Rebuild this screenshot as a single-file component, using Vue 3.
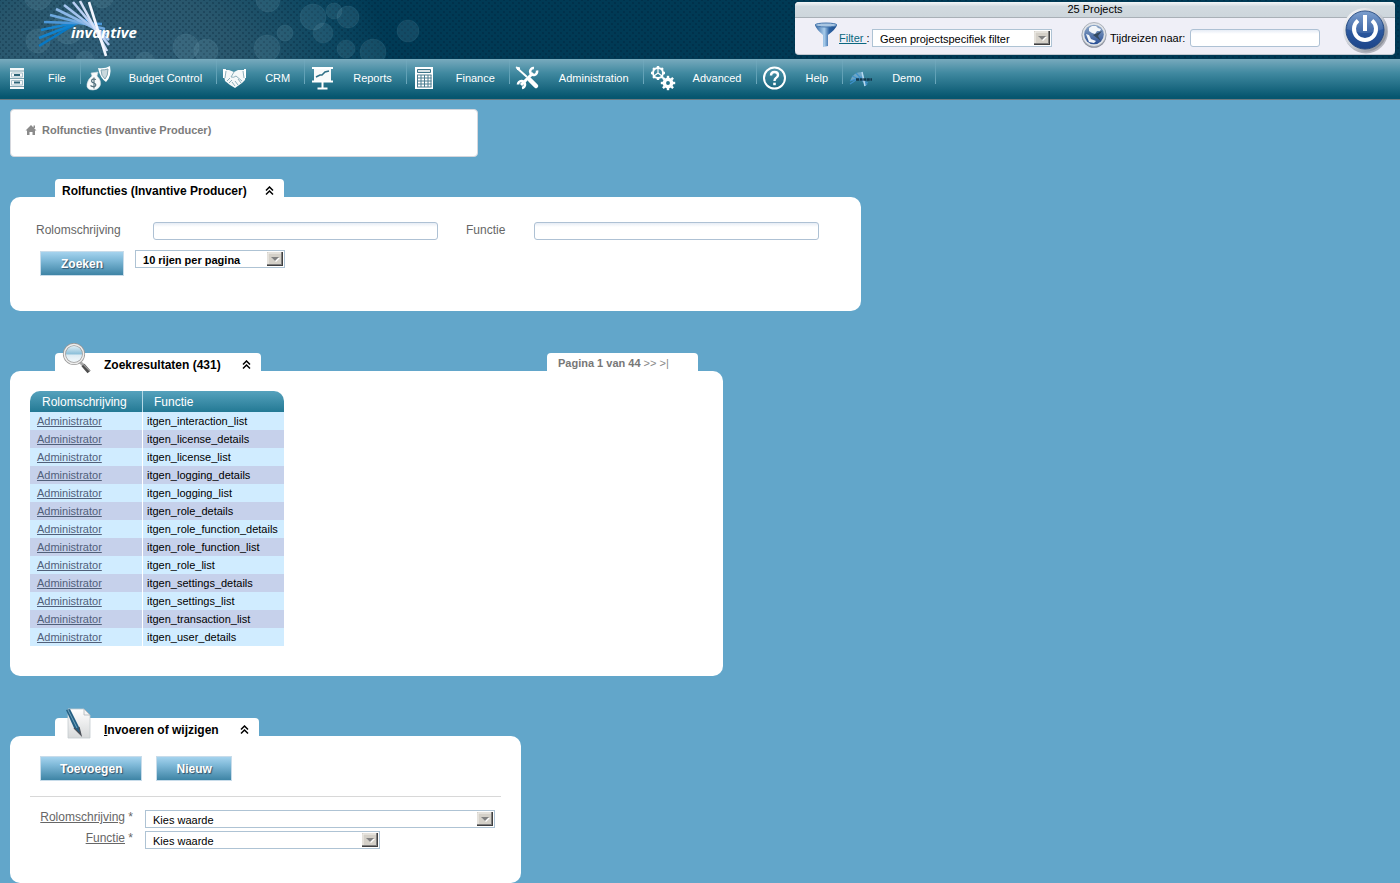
<script setup>
import { ref } from 'vue'

const menu = ['File', 'Budget Control', 'CRM', 'Reports', 'Finance', 'Administration', 'Advanced', 'Help', 'Demo']

const functions = [
  'itgen_interaction_list',
  'itgen_license_details',
  'itgen_license_list',
  'itgen_logging_details',
  'itgen_logging_list',
  'itgen_role_details',
  'itgen_role_function_details',
  'itgen_role_function_list',
  'itgen_role_list',
  'itgen_settings_details',
  'itgen_settings_list',
  'itgen_transaction_list',
  'itgen_user_details',
]

const bubbles = [
  [38, -4, 14], [102, -4, 12], [38, 41, 12], [68, 28, 16], [85, 60, 9], [145, 62, 10],
  [186, 47, 13], [206, 51, 12], [268, 0, 12], [285, 33, 8], [267, 48, 13], [313, 17, 13],
  [334, 11, 8], [348, 17, 11], [323, 33, 10], [346, 49, 9], [373, 52, 13], [408, 31, 11],
]

const rays = [
  [39, 46, 75, 24, '#0878c4'], [39, 38, 80, 22, '#0f82cf'], [41, 30, 88, 20, '#1684cf'],
  [44, 22, 102, 24, '#4c97d8'], [50, 15, 105, 29, '#6ea9e0'], [56, 9, 108, 35, '#8cb8e8'],
  [64, 5, 109, 40, '#a4c4ee'], [73, 2, 109, 45, '#b9cff4'], [80, 1, 107, 51, '#d3dff8'],
  [89, 2, 106, 56, '#f4f6ff'],
]

const teeth = [0, 45, 90, 135, 180, 225, 270, 315]

const project = ref('Geen projectspecifiek filter')
const travel = ref('')
const role = ref('')
const func = ref('')
const pageSize = ref('10 rijen per pagina')
const newRole = ref('Kies waarde')
const newFunc = ref('Kies waarde')
</script>

<template>
  <div class="page">
    <header class="banner">
      <svg class="art" width="430" height="59" viewBox="0 0 430 59" aria-hidden="true">
        <circle v-for="(b, i) in bubbles" :key="i" :cx="b[0]" :cy="b[1]" :r="b[2]" fill="#8fc0cf" fill-opacity=".13" stroke="#8fc0cf" stroke-opacity=".08" />
        <line v-for="(r, i) in rays" :key="'r' + i" :x1="r[0]" :y1="r[1]" :x2="r[2]" :y2="r[3]" :stroke="r[4]" stroke-width="2.6" />
        <text x="71" y="38" class="brand">invantive</text>
      </svg>

      <section class="tools">
        <div class="tools-title">25 Projects</div>
        <div class="tools-row">
          <svg class="funnel" width="24" height="26" viewBox="0 0 24 26" aria-hidden="true">
            <defs>
              <linearGradient id="fun" x1="0" x2="1"><stop offset="0" stop-color="#2f62a0" /><stop offset=".42" stop-color="#a9cdec" /><stop offset=".65" stop-color="#2d62a3" /><stop offset="1" stop-color="#1f4f8c" /></linearGradient>
            </defs>
            <path d="M1 3 Q2 7 9 13 V25 L14 24 V13 Q22 7 23 3 Z" fill="url(#fun)" />
            <ellipse cx="12" cy="3" rx="11" ry="2" fill="#a9c6e2" stroke="#4676ad" />
          </svg>
          <label class="filter-label" for="project"><a href="#">Filter </a>:</label>
          <span class="pick pick-project">
            <select id="project" v-model="project"><option>Geen projectspecifiek filter</option></select>
            <svg class="drop" viewBox="0 0 16 14" aria-hidden="true"><path d="M0 0H16V14H0Z" fill="#404040" /><path d="M0 0H15V13H0Z" fill="#808080" /><path d="M0 0H14V12H0Z" fill="#d4d0c8" /><path d="M1 12V1H14" stroke="#f4f2ee" fill="none" /><path d="M5 6H13L9 10Z" fill="#fff" /><path d="M4 5H12L8 9Z" fill="#808080" /></svg>
          </span>
          <svg class="globe" width="26" height="26" viewBox="0 0 26 26" aria-hidden="true">
            <defs><linearGradient id="glb" x1="0" y1="0" x2="0" y2="1"><stop offset="0" stop-color="#90a9c8" /><stop offset="1" stop-color="#294f95" /></linearGradient></defs>
            <circle cx="13" cy="13.500" r="12.300" fill="#888e9b" />
            <circle cx="13" cy="12.500" r="12" fill="#dfe3e8" stroke="#a0a6ae" stroke-width=".8" />
            <circle cx="13" cy="12.500" r="9.800" fill="url(#glb)" />
            <path d="M8 6 L11 4 15 4 17 6 20 7 19 9 16 9 14 12 11 11 8 9Z M5 12 L8 13 10 17 15 19 13 21 8 20Z" fill="#f1f5f9" />
            <path d="M21 9 L12 13 20 19 17 14Z" fill="#344a60" />
          </svg>
          <label for="travel">Tijdreizen naar:</label>
          <input id="travel" v-model="travel" class="field travel" type="text" />
        </div>
        <button class="power" type="button" aria-label="Afmelden">
          <svg width="48" height="48" viewBox="0 0 48 48" aria-hidden="true">
            <defs>
              <linearGradient id="pow" x1="0" y1="0" x2="0" y2="1"><stop offset="0" stop-color="#6c93c8" /><stop offset=".5" stop-color="#2c59a0" /><stop offset="1" stop-color="#1d4589" /></linearGradient>
              <linearGradient id="rim" x1="0" y1="0" x2="1" y2="1"><stop offset="0" stop-color="#fff" /><stop offset=".55" stop-color="#c5cad2" /><stop offset="1" stop-color="#70757f" /></linearGradient>
            </defs>
            <circle cx="25" cy="25.500" r="22" fill="#777c86" opacity=".5" />
            <circle cx="24" cy="24" r="22" fill="url(#rim)" />
            <circle cx="24" cy="24" r="19" fill="url(#pow)" stroke="#274b82" />
            <path d="M6 23 A18 18 0 0 1 42 23 Q24 31 6 23Z" fill="#fff" opacity=".12" />
            <path d="M17 14.500 A11 11 0 1 0 31 14.500" fill="none" stroke="#fff" stroke-width="4" />
            <path d="M24 9V25" stroke="#fff" stroke-width="4" />
          </svg>
        </button>
      </section>
    </header>

    <nav class="menu">
      <a v-for="(item, i) in menu" :key="item" href="#" class="menu-item">
        <svg class="menu-icon" width="28" height="28" viewBox="0 0 28 28" aria-hidden="true">
          <g v-if="i === 0">
            <path d="M5 4H19V25H5Z" fill="#f5f8f9" />
            <path d="M5 7H19M5 14.500H19M5 22.500H19" stroke="#7fa3b1" />
            <path d="M6.500 9H17.500V13H6.500ZM6.500 16.500H17.500V21H6.500Z" fill="none" stroke="#a9c2cc" />
            <path d="M9 11H15M9 18.500H15" stroke="#2c6378" stroke-width="2" />
          </g>
          <g v-else-if="i === 1">
            <path d="M12 4Q19 5 24 2Q26 12 20 18Q14 14 12 4Z" fill="#fff" />
            <path d="M15 6Q19 6 22 5Q22 12 19 15Q15 12 15 6Z" fill="#cbd9de" stroke="#86a7b3" />
            <path d="M6 12L5 9 12 8 11 12Q16 17 14 22 Q12 26 7 26 Q0 26 1 20Q2 15 6 12Z" fill="#f8fafb" stroke="#c9d7dd" stroke-width=".6" />
            <path d="M10 15.500Q6 14 5.500 17Q6 19 8 19Q10.500 20 9.500 22Q7 23.500 4.500 21.500M8 13.500V24.500" fill="none" stroke="#54717d" stroke-width="1.200" />
          </g>
          <g v-else-if="i === 2">
            <path d="M1 6L7 6 12 8 16 6 22 6 24 8 23 16 20 19 13 24 8 21 3 17Z" fill="#f5f8f9" />
            <path d="M1 5V14L3 14 4 5ZM22 5L22 14H24V5Z" fill="#fff" />
            <path d="M12 8L9 13Q12 14 14 12L20 17M16 15L19 19M13 17L16 21M10 18L13 22M5 17L8 14M7 19L10 16M21 7L22 14M4 7L3 14" fill="none" stroke="#8fb0bc" stroke-width="1" />
          </g>
          <g v-else-if="i === 3" fill="none">
            <path d="M2 4H23" stroke="#fff" stroke-width="2" />
            <path d="M4 5H21V17H4Z" fill="#f8fafb" />
            <path d="M2 17.500H23M12.500 18V24M7.500 24.500H17.500" stroke="#fff" stroke-width="2" />
            <path d="M6 13L10 11 12 11 15 8 19 7" stroke="#2f6f87" stroke-width="1.500" />
          </g>
          <g v-else-if="i === 4">
            <path d="M3 3H21V25H3Z" fill="#fff" />
            <path d="M5.500 5.500H18.500V8.500H5.500Z" fill="#d6e1e5" stroke="#3d7489" />
            <path d="M5.500 11V23M9 11V23M12.500 11V23M16 11V23M19 11V23M5 11H19.500M5 14H19.500M5 17H19.500M5 20H19.500M5 23H19.500" fill="none" stroke="#4b7d90" />
          </g>
          <g v-else-if="i === 5" fill="none" stroke="#fff">
            <path d="M2 4L12 13" stroke-width="2" />
            <path d="M15 16L21 22" stroke-width="4.500" stroke-linecap="round" />
            <path d="M6 21L18 9" stroke-width="3" />
            <path d="M22 6.500A3.500 3.500 0 1 1 19 4M7 24A3.500 3.500 0 1 0 3 20.500" stroke-width="2.600" />
            <path d="M1 3L5 4 3 6Z" fill="#fff" />
          </g>
          <g v-else-if="i === 6" fill="none" stroke="#fff">
            <circle cx="9" cy="9" r="5" stroke-width="2" />
            <path v-for="t in teeth" :key="t" d="M9 2V4" stroke-width="2.400" :transform="`rotate(${t} 9 9)`" />
            <path d="M9 9V4M9 9L5 12M9 9L13 12" stroke-width="1.200" />
            <circle cx="19" cy="19" r="3.700" stroke-width="3.500" />
            <path v-for="t in teeth" :key="'b' + t" d="M19 11.800V14" stroke-width="2.400" :transform="`rotate(${t} 19 19)`" />
          </g>
          <g v-else-if="i === 7" fill="none" stroke="#fff">
            <circle cx="12.500" cy="14" r="10.500" stroke-width="2" />
            <path d="M9 11.500Q9 8 12.500 8Q16 8 16 11Q16 13 14 14Q12.500 15 12.500 17" stroke-width="2.400" />
            <path d="M12.500 18.700V21.200" stroke-width="2.600" />
          </g>
          <g v-else fill="none">
            <path d="M2 17Q5 8 14 8L19 21Q11 13 2 17Z" fill="#8bb9dd" opacity=".65" />
            <path d="M2 20L11 14M2 17L14 13M4 12L20 19M8 9L19 21M14 8L17 22" stroke="#3e91cb" stroke-width="1.200" />
            <path d="M14 8L17 22" stroke="#b9d9ee" stroke-width="1.500" />
            <path d="M8 15.500H24" stroke="#12384e" stroke-width="2.500" stroke-dasharray="3 .6" />
          </g>
        </svg>
        {{ item }}
      </a>
    </nav>

    <main class="content">
      <div class="crumbs">
        <svg width="12" height="12" viewBox="0 0 12 12" aria-hidden="true"><path d="M6 1L11.500 6.500H10V11H7.500V8H4.500V11H2V6.500H.5ZM8.500 1.500H10V4H8.500Z" fill="#8b8b8b" /></svg>
        <span>Rolfuncties (Invantive Producer)</span>
      </div>

      <section class="panel search">
        <div class="tabs">
          <h2 class="tab">Rolfuncties (Invantive Producer)
            <button class="fold" type="button" aria-label="Inklappen"><svg width="9" height="10" viewBox="0 0 9 10"><path d="M1 4.500L4.500 1 8 4.500M1 8.500L4.500 5 8 8.500" /></svg></button>
          </h2>
        </div>
        <form class="card" @submit.prevent>
          <div class="search-row">
            <label for="role">Rolomschrijving</label>
            <input id="role" v-model="role" class="field" type="text" />
            <label for="func">Functie</label>
            <input id="func" v-model="func" class="field" type="text" />
          </div>
          <div class="actions">
            <button class="btn" type="submit">Zoeken</button>
            <span class="pick pick-size">
              <select v-model="pageSize" aria-label="Rijen per pagina"><option>10 rijen per pagina</option></select>
              <svg class="drop" viewBox="0 0 16 14" aria-hidden="true"><path d="M0 0H16V14H0Z" fill="#404040" /><path d="M0 0H15V13H0Z" fill="#808080" /><path d="M0 0H14V12H0Z" fill="#d4d0c8" /><path d="M1 12V1H14" stroke="#f4f2ee" fill="none" /><path d="M5 6H13L9 10Z" fill="#fff" /><path d="M4 5H12L8 9Z" fill="#808080" /></svg>
            </span>
          </div>
        </form>
      </section>

      <section class="panel results">
        <div class="tabs">
          <h2 class="tab with-icon">
            <svg class="tab-icon" width="32" height="34" viewBox="0 0 32 34" aria-hidden="true">
              <defs><linearGradient id="lens" x1="0" y1="0" x2="0" y2="1"><stop offset="0" stop-color="#eff7fb" /><stop offset=".5" stop-color="#8bbfd9" /><stop offset=".55" stop-color="#dcebf3" /><stop offset="1" stop-color="#f7fbfd" /></linearGradient></defs>
              <path d="M18 19L22 23" stroke="#aaa" stroke-width="3" />
              <path d="M21 22L27 29" stroke="#4d4d4d" stroke-width="4" />
              <path d="M21 21L28 28" stroke="#999" stroke-width="1.200" />
              <circle cx="12" cy="11" r="9.600" fill="url(#lens)" stroke="#999" stroke-width="3" />
              <circle cx="12" cy="11" r="9.600" fill="none" stroke="#eee" stroke-width="1.500" />
            </svg>
            Zoekresultaten (431)
            <button class="fold" type="button" aria-label="Inklappen"><svg width="9" height="10" viewBox="0 0 9 10"><path d="M1 4.500L4.500 1 8 4.500M1 8.500L4.500 5 8 8.500" /></svg></button>
          </h2>
          <div class="pager"><b>Pagina 1 van 44</b> <a href="#">&gt;&gt;</a> <a href="#">&gt;|</a></div>
        </div>
        <div class="card">
          <table class="grid">
            <thead><tr><th scope="col">Rolomschrijving</th><th scope="col">Functie</th></tr></thead>
            <tbody>
              <tr v-for="f in functions" :key="f"><td><a href="#">Administrator</a></td><td>{{ f }}</td></tr>
            </tbody>
          </table>
        </div>
      </section>

      <section class="panel editor">
        <div class="tabs">
          <h2 class="tab with-icon">
            <svg class="tab-icon" width="32" height="34" viewBox="0 0 32 34" aria-hidden="true">
              <defs><linearGradient id="paper" x1="0" y1="0" x2="0" y2="1"><stop offset="0" stop-color="#fff" /><stop offset="1" stop-color="#d7d9da" /></linearGradient></defs>
              <path d="M6 1H22L28 7V30H6Z" fill="url(#paper)" stroke="#c4cbcf" stroke-width=".8" />
              <path d="M22 1V7H28Z" fill="#f5f5f5" stroke="#aeb5b9" stroke-width=".8" />
              <path d="M4 2L8 1 17 19 19 27 12 20Z" fill="#245f83" />
              <path d="M6 2L15 20" stroke="#75a6bf" stroke-width="1" />
              <path d="M12 20L19 27 17 19" fill="none" stroke="#4b4f57" stroke-width="1.200" />
            </svg>
            <span><u>I</u>nvoeren of wijzigen</span>
            <button class="fold" type="button" aria-label="Inklappen"><svg width="9" height="10" viewBox="0 0 9 10"><path d="M1 4.500L4.500 1 8 4.500M1 8.500L4.500 5 8 8.500" /></svg></button>
          </h2>
        </div>
        <form class="card" @submit.prevent>
          <div class="edit-buttons">
            <button class="btn" type="submit">Toevoegen</button>
            <button class="btn" type="reset">Nieuw</button>
          </div>
          <hr />
          <div class="edit-grid">
            <label for="new-role"><u>Rolomschrijving</u> *</label>
            <span class="pick pick-role">
              <select id="new-role" v-model="newRole"><option>Kies waarde</option></select>
              <svg class="drop" viewBox="0 0 16 14" aria-hidden="true"><path d="M0 0H16V14H0Z" fill="#404040" /><path d="M0 0H15V13H0Z" fill="#808080" /><path d="M0 0H14V12H0Z" fill="#d4d0c8" /><path d="M1 12V1H14" stroke="#f4f2ee" fill="none" /><path d="M5 6H13L9 10Z" fill="#fff" /><path d="M4 5H12L8 9Z" fill="#808080" /></svg>
            </span>
            <label for="new-func"><u>Functie</u> *</label>
            <span class="pick pick-func">
              <select id="new-func" v-model="newFunc"><option>Kies waarde</option></select>
              <svg class="drop" viewBox="0 0 16 14" aria-hidden="true"><path d="M0 0H16V14H0Z" fill="#404040" /><path d="M0 0H15V13H0Z" fill="#808080" /><path d="M0 0H14V12H0Z" fill="#d4d0c8" /><path d="M1 12V1H14" stroke="#f4f2ee" fill="none" /><path d="M5 6H13L9 10Z" fill="#fff" /><path d="M4 5H12L8 9Z" fill="#808080" /></svg>
            </span>
          </div>
        </form>
      </section>
    </main>
  </div>
</template>

<style>
html {
  background: #62a6ca;
}
</style>

<style scoped>
.page {
  font: 11px/14px "Liberation Sans", Arial, sans-serif;
  color: #000;
}
.page * {
  box-sizing: border-box;
}
.banner {
  display: flex;
  justify-content: space-between;
  height: 59px;
  padding: 2px 5px 0 0;
  position: relative;
  background:
    radial-gradient(circle, rgba(0, 25, 45, 0.25) 1px, transparent 1px) 0 0 / 6px 6px,
    radial-gradient(circle, rgba(0, 25, 45, 0.25) 1px, transparent 1px) 3px 3px / 6px 6px,
    radial-gradient(ellipse 280px 190px at 110px 70px, #31607a 0, #29576d 45%, #0d4761 80%, #003a55 100%);
}
.art {
  position: absolute;
  left: 0;
  top: 0;
}
.brand {
  font: italic bold 15px "Open Sans", "Noto Sans", sans-serif;
  fill: #fff;
}
.tools {
  position: relative;
  width: 600px;
  height: 53px;
  margin-left: auto;
  background: #efeff7;
  border-radius: 4px;
  border-bottom: 1px solid #c3c9d1;
}
.tools-title {
  height: 16px;
  text-align: center;
  background: linear-gradient(#f5f7f8, #d2dae0 30%, #cdd6dc);
  border-bottom: 1px solid #a9b0b7;
  border-radius: 4px 4px 0 0;
}
.tools-row {
  display: flex;
  align-items: center;
  height: 36px;
  padding: 4px 0 0 19px;
}
.funnel {
  margin-right: 1px;
  align-self: flex-start;
}
.filter-label {
  width: 32px;
}
.filter-label a {
  color: #0b6780;
  white-space: pre;
}
.globe {
  margin: 0 3px 0 29px;
  align-self: flex-start;
}
.travel {
  margin-left: auto;
  margin-right: 75px;
}
.power {
  position: absolute;
  right: 6px;
  top: 4px;
  width: 48px;
  height: 48px;
  padding: 0;
  border: 0;
  background: none;
}
.menu {
  display: flex;
  height: 41px;
  background: linear-gradient(#78aabd, #4089a0 35%, #06566f 95%);
  border-bottom: 1px solid #6d7a80;
}
.menu-item {
  position: relative;
  height: 25px;
  padding: 12px 14px 0 48px;
  border-right: 1px solid;
  border-image: linear-gradient(rgba(130, 185, 204, 0.1), rgba(130, 185, 204, 0.8)) 1;
  color: #fff;
  text-decoration: none;
  white-space: nowrap;
}
.menu-item:nth-child(n + 5) {
  padding-left: 49px;
}
.menu-icon {
  position: absolute;
  left: 5px;
  top: 5px;
}
.content {
  padding: 9px 10px 0;
}
.crumbs {
  display: flex;
  gap: 5px;
  align-items: center;
  max-width: 468px;
  height: 48px;
  margin-bottom: 22px;
  padding: 0 14px 6px;
  background: #fff;
  border: 1px solid #d5d7dd;
  border-radius: 4px;
  color: #7c7c7c;
  font-weight: bold;
}
.panel + .panel {
  margin-top: 42px;
}
.search {
  max-width: 851px;
}
.results {
  max-width: 713px;
}
.editor {
  max-width: 511px;
}
.tabs {
  display: flex;
  justify-content: space-between;
  padding: 0 25px 0 45px;
}
.tab {
  position: relative;
  display: flex;
  height: 18px;
  margin: 0;
  padding: 5px 10px 0 7px;
  background: #fff;
  border-radius: 4px 4px 0 0;
  font-size: 12px;
  line-height: 14px;
  white-space: nowrap;
}
.with-icon {
  padding-left: 49px;
}
.tab-icon {
  position: absolute;
  left: 7px;
  top: -10px;
}
.fold {
  display: flex;
  margin: 2px 0 0 21px;
  padding: 0;
  border: 0;
  background: none;
}
.search .fold {
  margin-left: 18px;
}
.fold path {
  fill: none;
  stroke: #000;
  stroke-width: 1.5;
}
.card {
  padding: 20px;
  background: #fff;
  border-radius: 10px;
}
.search .card {
  padding: 25px 26px 35px;
}
.search-row {
  display: grid;
  grid-template-columns: 117px 285px 96px 285px;
  height: 18px;
  color: #666;
  font-size: 12px;
  line-height: 16px;
}
.search-row label:nth-of-type(2) {
  margin-left: 28px;
}
.field {
  height: 18px;
  padding: 0 4px;
  border: 1px solid #aec1d4;
  border-radius: 3px;
  background: linear-gradient(#e6ecf5, #fff 4px);
  font: inherit;
}
.travel {
  width: 130px;
}
.actions {
  display: flex;
  gap: 11px;
  height: 36px;
  padding: 10px 4px 0;
  align-items: flex-end;
}
.actions .pick {
  align-self: flex-start;
}
.btn {
  height: 25px;
  padding: 0 19px;
  border: 1px solid #c8dcea;
  background: linear-gradient(#a5d3ee, #7fb9d8 35%, #3e84a5);
  color: #fff;
  font: bold 12px/14px "Liberation Sans", Arial, sans-serif;
  text-shadow: 1px 1px 1px #35536b;
}
.search .btn {
  padding: 0 20px;
}
.pick {
  position: relative;
  display: block;
  height: 18px;
}
.pick select {
  display: block;
  width: 100%;
  height: 18px;
  padding: 2px 20px 0 7px;
  appearance: none;
  border: 1px solid #aec3d4;
  border-radius: 0;
  background: #fff;
  color: #000;
  font: 11px/14px "Liberation Sans", Arial, sans-serif;
}
.pick-size select {
  font-weight: bold;
}
.drop {
  position: absolute;
  right: 2px;
  top: 2px;
  width: 16px;
  height: 14px;
  pointer-events: none;
}
.pick-project {
  width: 180px;
  margin-left: 1px;
}
.pick-size {
  width: 150px;
}
.pager {
  width: 151px;
  height: 18px;
  padding: 3px 11px 0;
  background: #fff;
  border-radius: 4px 4px 0 0;
  color: #777;
}
.pager a {
  color: #888;
  text-decoration: none;
}
.results .card {
  padding-bottom: 30px;
}
.grid {
  border-collapse: separate;
  border-spacing: 0;
}
.grid th {
  height: 21px;
  padding: 0 11px 0 12px;
  background: linear-gradient(#56a2bd, #237994);
  color: #fff;
  font-size: 12px;
  font-weight: normal;
  text-align: left;
}
.grid th:first-child {
  width: 112px;
  border-radius: 10px 0 0 0;
}
.grid th:last-child {
  width: 142px;
  border-radius: 0 10px 0 0;
  border-left: 1px solid #b5d9e6;
  padding-left: 11px;
}
.grid td {
  height: 18px;
  padding: 0 7px;
  background: #d0ecff;
}
.grid td:last-child {
  padding: 0 5px 0 4px;
  border-left: 1px solid #fff;
}
.grid tr:nth-child(even) td {
  background: #c6d1eb;
}
.grid a {
  color: #51607a;
}
.editor .card {
  padding-bottom: 34px;
}
.edit-buttons {
  display: flex;
  gap: 14px;
  padding: 0 10px;
}
hr {
  height: 1px;
  margin: 15px 0 13px;
  border: 0;
  background: #d8d8d8;
}
.edit-grid {
  display: grid;
  grid-template-columns: 103px 1fr;
  gap: 3px 12px;
  color: #666;
  font-size: 12px;
  line-height: 15px;
}
.edit-grid label {
  text-align: right;
}
.pick-role {
  width: 350px;
}
.pick-func {
  width: 235px;
}
</style>
